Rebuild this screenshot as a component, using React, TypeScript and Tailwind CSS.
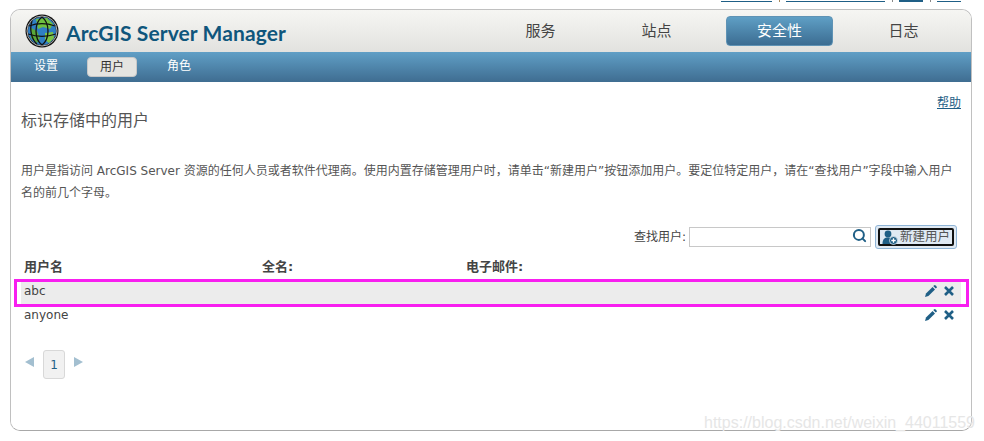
import React from 'react';
import { Search } from 'lucide-react';

const CJK = "font-['DejaVu_Sans','Noto_Sans_CJK_SC',sans-serif]";

function Globe() {
  return (
    <svg width="34" height="34" viewBox="0 0 34 34" className="shrink-0">
      <circle cx="17" cy="17" r="16.5" fill="#111" />
      <circle cx="17" cy="17" r="14" fill="#2f7fc4" />
      <path d="M11 5 L22 4 L28 10 L25 15 L18 13 L13 15 Z" fill="#6fbf3f" />
      <path d="M6 14 L12 17 L15 24 L12 29 L6 24 Z" fill="#5aa83a" />
      <path d="M20 19 L28 18 L29 24 L24 29 L20 26 Z" fill="#7cc545" />
      <g fill="none" stroke="#111" strokeWidth="1.3">
        <path d="M17 3 C9 9 9 25 17 31" />
        <path d="M17 3 C25 9 25 25 17 31" />
        <path d="M4 12 C12 9 22 9 30 12" />
        <path d="M3 20 C12 23 22 23 31 20" />
        <path d="M7 7 C4 16 7 26 12 30" />
      </g>
      <circle cx="17" cy="17" r="15" fill="none" stroke="#ddd" strokeWidth="0.8" />
    </svg>
  );
}

function UserAdd() {
  return (
    <svg width="16" height="15" viewBox="0 0 16 15" className="shrink-0">
      <circle cx="6" cy="4" r="3.4" fill="#1f5f86" />
      <path d="M0.5 14 C0.5 9 2.5 7.5 6 7.5 C9 7.5 10 9 10 14 Z" fill="#1f5f86" />
      <circle cx="11.5" cy="10.5" r="4" fill="#1f5f86" stroke="#dfe9f3" strokeWidth="0.8" />
      <path d="M11.5 8.3 V12.7 M9.3 10.5 H13.7" stroke="#fff" strokeWidth="1.3" />
    </svg>
  );
}

function RowActions() {
  return (
    <div className="flex items-center gap-[7px]">
      <svg width="12" height="12" viewBox="0 0 12 12" fill="#1f5f86">
        <path d="M0 12 L1 8.6 L7.6 2 L10 4.4 L3.4 11 Z" />
        <path d="M8.4 1.2 L9.4 0.2 Q9.8 -0.1 10.2 0.2 L11.8 1.8 Q12.1 2.2 11.8 2.6 L10.8 3.6 Z" />
      </svg>
      <svg width="10" height="10" viewBox="0 0 10 10" stroke="#1f5f86" strokeWidth="2.6">
        <path d="M1 1 L9 9 M9 1 L1 9" />
      </svg>
    </div>
  );
}

function UserRow({ name, selected }: { name: string; selected?: boolean }) {
  return (
    <div className={`flex h-[24px] items-center justify-between pb-[4px] pl-[3px] pr-[7px] ${selected ? 'bg-[#ececec]' : ''}`}>
      <span className="text-[12px] text-[#444]">{name}</span>
      <RowActions />
    </div>
  );
}

const TABS = [
  { label: '服务', active: false, gap: 'ml-[21px]' },
  { label: '站点', active: false, gap: 'ml-[9px]' },
  { label: '安全性', active: true, gap: 'ml-[16px]' },
  { label: '日志', active: false, gap: 'ml-[17px]' },
];

export default function App() {
  return (
    <div className={`relative h-[441px] w-[984px] overflow-hidden bg-white ${CJK}`}>
      {/* Cut-off links above the panel */}
      <div className="flex h-[2px] items-end pl-[721px]">
        <div className="h-[1px] w-[51px] bg-[#1f5f86]" />
        <div className="ml-[7px] h-[2px] w-[1px] bg-[#a98a5a]" />
        <div className="ml-[6px] h-[1px] w-[99px] bg-[#1f5f86]" />
        <div className="ml-[7px] h-[2px] w-[1px] bg-[#888]" />
        <div className="ml-[6px] h-[2px] w-[24px] bg-[#1f5f86]" />
        <div className="ml-[7px] h-[2px] w-[1px] bg-[#888]" />
        <div className="ml-[6px] h-[1px] w-[24px] bg-[#1f5f86]" />
      </div>

      <div className="ml-[10px] mt-[7px] flex h-[422px] w-[962px] flex-col overflow-hidden rounded-[10px] border border-[#c0c0c0] border-b-[#a8a8a8]">
        {/* Header */}
        <div className="flex h-[42px] shrink-0 items-center bg-gradient-to-b from-[#f6f6f3] to-[#e2e2df] pl-[14px]">
          <Globe />
          <span className="ml-[7px] mt-[3px] w-[400px] font-['Lato','Open_Sans',sans-serif] text-[21px] font-bold tracking-[0.1px] text-[#0f567c]">
            ArcGIS Server Manager
          </span>
          {TABS.map((t) => (
            <div
              key={t.label}
              className={`${t.gap} flex h-[30px] w-[107px] items-center justify-center rounded-[4px] text-[15px] ${
                t.active
                  ? 'border border-[#5f93b5] bg-gradient-to-b from-[#5f9fc5] to-[#3c6d92] text-white'
                  : 'text-[#444]'
              }`}
            >
              {t.label}
            </div>
          ))}
        </div>

        {/* Sub nav */}
        <div className="flex h-[30px] shrink-0 items-center bg-gradient-to-b from-[#609fc6] to-[#3f6d91] pl-[10px] text-[12px]">
          <span className="flex w-[50px] justify-center pb-[3px] text-white">设置</span>
          <span className="ml-[16px] flex h-[20px] w-[50px] items-center justify-center rounded-[4px] border border-[#c8c8c8] bg-[#e4e4e1] text-[#333]">用户</span>
          <span className="ml-[17px] flex w-[50px] justify-center pb-[3px] text-white">角色</span>
        </div>

        {/* Body */}
        <div className="relative flex-1 bg-white px-[10px]">
          <div className="mt-[13px] flex justify-end">
            <a className="text-[12px] leading-[16px] text-[#1f5f86] underline">帮助</a>
          </div>
          <h1 className="text-[16px] leading-[20px] text-[#555]">标识存储中的用户</h1>
          <p className="mt-[29px] w-[936px] text-[12px] leading-[22px] text-[#555]">
            用户是指访问 ArcGIS Server 资源的任何人员或者软件代理商。使用内置存储管理用户时，请单击“新建用户”按钮添加用户。要定位特定用户，请在“查找用户”字段中输入用户名的前几个字母。
          </p>

          {/* Search */}
          <div className="mt-[21px] flex h-[24px] items-center justify-end pr-[4px]">
            <span className="text-[12px] text-[#444]">查找用户:</span>
            <div className="ml-[3px] flex h-[20px] w-[182px] items-center justify-end border border-[#c8c8c8] pb-[3px] pr-[3px] text-[#1f5f86]">
              <Search size={15} strokeWidth={3.2} />
            </div>
            <div className="ml-[4px] flex h-[24px] w-[82px] items-center justify-center rounded-[3px] border border-[#8fb4d6] bg-[#dfe9f3] p-[2px]">
              <div className="flex h-full w-full items-center justify-center gap-[2px] rounded-[2px] border-2 border-[#111] text-[12.5px] text-[#555]">
                <UserAdd />
                新建用户
              </div>
            </div>
          </div>

          {/* Table */}
          <div className="mb-[1px] mt-[5px] flex h-[26px] items-center pl-[3px] text-[13px] font-bold text-[#444]">
            <span className="w-[238px]">用户名</span>
            <span className="w-[204px]">全名:</span>
            <span>电子邮件:</span>
          </div>
          <UserRow name="abc" selected />
          <UserRow name="anyone" />

          {/* Pager */}
          <div className="mt-[21px] flex items-start pl-[4px]">
            <div className="mt-[7px] h-0 w-0 border-y-[5px] border-r-[9px] border-y-transparent border-r-[#a3bfd0]" />
            <div className="ml-[9px] flex h-[29px] w-[22px] items-center justify-center rounded-[3px] border border-[#d8d8d8] bg-[#f1f1f1] text-[12px] text-[#1f5f86]">1</div>
            <div className="ml-[9px] mt-[7px] h-0 w-0 border-y-[5px] border-l-[9px] border-y-transparent border-l-[#a3bfd0]" />
          </div>
        </div>
      </div>

      {/* Annotation drawn over the selected row */}
      <div className="pointer-events-none absolute left-[14px] top-[279px] h-[28px] w-[955px] border-[3px] border-[#f81ff0]" />
      {/* Watermark */}
      <div className="pointer-events-none absolute left-[704px] top-[413px] font-['Liberation_Sans',sans-serif] text-[16px] leading-[20px] text-[#e6e6e6]">
        https://blog.csdn.net/weixin_44011559
      </div>
    </div>
  );
}
